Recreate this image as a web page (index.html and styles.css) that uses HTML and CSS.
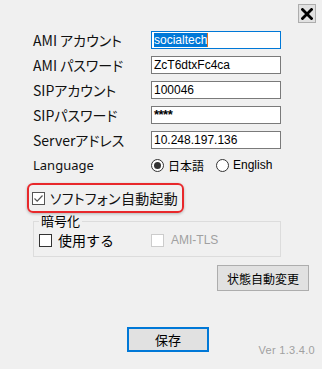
FILE: index.html
```html
<!DOCTYPE html>
<html lang="ja">
<head>
    <meta charset="UTF-8">
    <title>設定</title>
    <link rel="stylesheet" href="styles.css">
</head>
<body>
    <div class="window">
        <div class="titlebar">
            <button class="close-btn" aria-label="閉じる">
                <svg width="12" height="12" viewBox="0 0 12 12">
                    <path d="M1.5 1.5 L10.5 10.5 M10.5 1.5 L1.5 10.5" stroke="#000" stroke-width="2.8" stroke-linecap="square"/>
                </svg>
            </button>
        </div>

        <div class="settings">
            <div class="row">
                <span class="label">AMI アカウント</span>
                <div class="field focused"><span class="selected">socialtech</span><span class="caret"></span></div>
            </div>
            <div class="row">
                <span class="label">AMI パスワード</span>
                <div class="field">ZcT6dtxFc4ca</div>
            </div>
            <div class="row">
                <span class="label">SIPアカウント</span>
                <div class="field">100046</div>
            </div>
            <div class="row">
                <span class="label">SIPパスワード</span>
                <div class="field stars">****</div>
            </div>
            <div class="row">
                <span class="label">Serverアドレス</span>
                <div class="field">10.248.197.136</div>
            </div>
            <div class="row lang-row">
                <span class="label small">Language</span>
                <div class="radios">
                    <span class="radio checked"></span><span class="opt jp">日本語</span>
                    <span class="radio"></span><span class="opt">English</span>
                </div>
            </div>

            <div class="autostart">
                <span class="checkbox checked">
                    <svg width="11" height="11" viewBox="0 0 11 11">
                        <path d="M1.5 5.5 L4.2 8.2 L9.5 2.5" fill="none" stroke="#555" stroke-width="1.2"/>
                    </svg>
                </span>
                <span class="autostart-text">ソフトフォン自動起動</span>
            </div>

            <fieldset class="crypto">
                <legend>暗号化</legend>
                <div class="crypto-row">
                    <span class="check-item">
                        <span class="checkbox"></span>
                        <span class="use-text">使用する</span>
                    </span>
                    <span class="check-item disabled">
                        <span class="checkbox"></span>
                        <span class="tls-text">AMI-TLS</span>
                    </span>
                </div>
            </fieldset>

            <div class="status-line">
                <button class="btn status-btn">状態自動変更</button>
            </div>
        </div>

        <div class="footer">
            <button class="btn save-btn">保存</button>
            <span class="version">Ver 1.3.4.0</span>
        </div>
    </div>
</body>
</html>
```

FILE: styles.css
```css
body {
    margin: 0;
    background: #f0f0f0;
    font-family: "Noto Sans CJK JP", sans-serif;
    color: #000;
}
.window {
    width: 322px;
    height: 369px;
    overflow: hidden;
}
.titlebar {
    display: flex;
    justify-content: flex-end;
    padding: 4px 6px 0 0;
}
.close-btn {
    width: 18px;
    height: 19px;
    padding: 0;
    border: 1px solid #adadad;
    background: #e1e1e1;
    display: flex;
    align-items: center;
    justify-content: center;
}
.settings {
    padding: 8px 13px 0 33px;
}
.row {
    display: flex;
    align-items: center;
    height: 18px;
    margin-bottom: 7px;
}
.label {
    width: 118px;
    font-size: 14px;
    font-feature-settings: "palt";
    line-height: 18px;
    white-space: nowrap;
    color: #111;
}
.label.small {
    font-size: 13px;
    font-family: "Noto Sans", sans-serif;
}
.field {
    box-sizing: border-box;
    width: 130px;
    height: 18px;
    border: 1px solid #7a7a7a;
    background: #fff;
    font-family: "Liberation Sans", sans-serif;
    font-size: 12px;
    line-height: 16px;
    padding-left: 2px;
    display: flex;
    align-items: center;
}
.field.focused {
    border-color: #0078d7;
}
.field.stars {
    font-size: 13px;
    font-weight: bold;
    letter-spacing: -0.5px;
}
.selected {
    background: #0078d7;
    color: #fff;
    line-height: 14px;
}
.caret {
    display: inline-block;
    width: 1px;
    height: 14px;
    background: #e07020;
}
.lang-row {
    margin-bottom: 9px;
}
.radios {
    display: flex;
    align-items: center;
}
.radio {
    box-sizing: border-box;
    width: 13px;
    height: 13px;
    border: 1px solid #333;
    border-radius: 50%;
    background: #fff;
    display: flex;
    align-items: center;
    justify-content: center;
}
.radio.checked::after {
    content: "";
    width: 7px;
    height: 7px;
    border-radius: 50%;
    background: #333;
}
.opt {
    font-size: 12px;
    margin-left: 4px;
    font-family: "Liberation Sans", sans-serif;
}
.opt.jp {
    font-family: "Noto Sans CJK JP", sans-serif;
    margin-right: 12px;
}
.checkbox {
    box-sizing: border-box;
    width: 13px;
    height: 13px;
    border: 1px solid #333;
    background: #fff;
    display: inline-flex;
    align-items: center;
    justify-content: center;
    flex-shrink: 0;
}
.autostart {
    box-sizing: border-box;
    width: 157px;
    height: 30px;
    margin-left: -6px;
    border: 2px solid #e8282b;
    border-radius: 6px;
    box-shadow: 0 1px 3px rgba(0, 0, 0, 0.25);
    display: flex;
    align-items: center;
    padding-left: 3px;
}
.autostart .checkbox {
    border-color: #555;
}
.autostart-text {
    font-size: 14px;
    font-feature-settings: "palt";
    margin-left: 5px;
    letter-spacing: 0.3px;
    color: #111;
}
.crypto {
    width: 248px;
    box-sizing: border-box;
    margin: 1px 0 0 0;
    padding: 0 6px 6px 5px;
    border: 1px solid #dcdcdc;
    min-width: 0;
}
.crypto legend {
    font-size: 13px;
    padding: 0 2px;
    line-height: 14px;
}
.crypto-row {
    display: flex;
    align-items: center;
    height: 20px;
    margin-top: 2px;
}
.check-item {
    display: flex;
    align-items: center;
}
.use-text {
    font-size: 14px;
    margin-left: 6px;
    width: 93px;
}
.check-item.disabled .checkbox {
    border-color: #ccc;
}
.tls-text {
    font-family: "Liberation Sans", sans-serif;
    font-size: 12px;
    color: #a0a0a0;
    margin-left: 7px;
}
.status-line {
    display: flex;
    justify-content: flex-end;
    margin-top: 8px;
}
.btn {
    box-sizing: border-box;
    background: #e1e1e1;
    border: 1px solid #adadad;
    font-family: "Noto Sans CJK JP", sans-serif;
    font-size: 12px;
    color: #000;
    padding: 0;
}
.status-btn {
    width: 92px;
    height: 26px;
}
.footer {
    display: flex;
    align-items: flex-end;
    justify-content: space-between;
    padding: 36px 7px 0 127px;
}
.save-btn {
    width: 82px;
    height: 25px;
    border: 2px solid #0078d7;
    font-size: 13px;
}
.version {
    font-family: "Liberation Sans", sans-serif;
    font-size: 11px;
    color: #a0a0a0;
    margin-bottom: -4px;
    letter-spacing: 0.3px;
}
```
